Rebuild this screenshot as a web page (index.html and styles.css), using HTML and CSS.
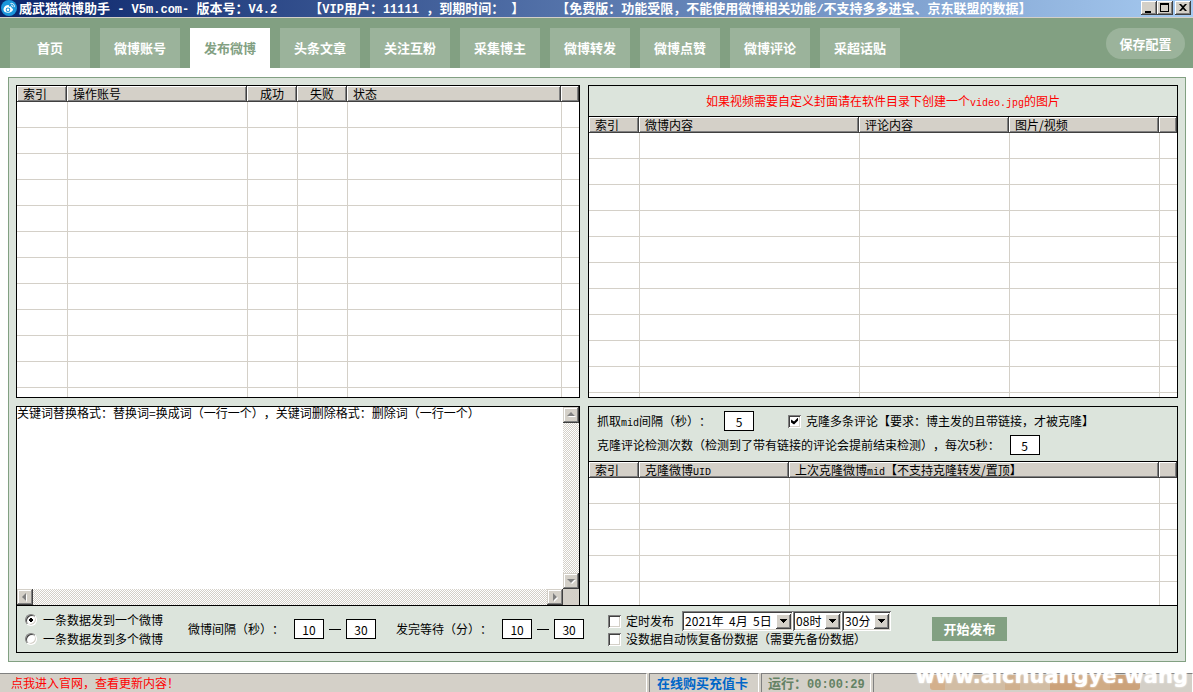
FILE: index.html
```html
<!DOCTYPE html>
<html lang="zh-CN">
<head>
<meta charset="utf-8">
<title>威武猫微博助手</title>
<link rel="stylesheet" href="styles.css">
</head>
<body>
<div class="app">
  <header class="titlebar">
    <svg class="logo" viewBox="0 0 16 16" aria-hidden="true">
      <circle cx="8" cy="8" r="8" fill="#1b96dc"/>
      <path d="M7 5C4 5 2.500 8 2.500 9.500C2.500 14 12 13.500 12 9.500C12 8.500 11 8.200 10.500 8C11 6.500 9.500 6 8 6.700C8 5.500 8 5 7 5Z" fill="#fff"/>
      <circle cx="7" cy="9.700" r="2.300" fill="#1b96dc"/>
      <circle cx="7" cy="9.700" r="1.300" fill="#fff"/>
      <path d="M9.500 3.500C12 2.800 14 5 13.200 7.200M10 5.200C11.200 5 12 6 11.600 7" fill="none" stroke="#fff"/>
    </svg>
    <h1 class="caption">
      <span>威武猫微博助手<i> - V5m.com- </i>版本号：<i>V4.2</i></span>
      <span>【<i>VIP</i>用户：<i>11111 </i>，到期时间：<i> </i>】</span>
      <span>【免费版：功能受限，不能使用微博相关功能<i>/</i>不支持多多进宝、京东联盟的数据】</span>
    </h1>
    <div class="win-buttons">
      <button class="win-btn" aria-label="最小化"><svg viewBox="0 0 16 14"><path d="M4 10h6v2H4z"/></svg></button>
      <button class="win-btn" aria-label="最大化"><svg viewBox="0 0 16 14"><path d="M3 2h9v9H3zM4 4v6h7V4z" fill-rule="evenodd"/></svg></button>
      <button class="win-btn win-close" aria-label="关闭"><svg viewBox="0 0 16 14"><path d="M4 3h2l2 2 2-2h2L9 6.500l3 3.500h-2L8 8l-2 2H4l3-3.500z"/></svg></button>
    </div>
  </header>

  <nav class="nav">
    <button class="tab">首页</button>
    <button class="tab">微博账号</button>
    <button class="tab active">发布微博</button>
    <button class="tab">头条文章</button>
    <button class="tab">关注互粉</button>
    <button class="tab">采集博主</button>
    <button class="tab">微博转发</button>
    <button class="tab">微博点赞</button>
    <button class="tab">微博评论</button>
    <button class="tab">采超话贴</button>
    <button class="save">保存配置</button>
  </nav>

  <main class="panel">
    <div class="quads">
      <section class="box">
        <div class="table-wrap">
          <table>
            <colgroup><col class="c50"><col class="c180"><col class="c50"><col class="c50"><col><col class="c18"></colgroup>
            <thead><tr><th>索引</th><th>操作账号</th><th class="mid">成功</th><th class="mid">失败</th><th>状态</th><th></th></tr></thead>
            <tbody>
              <tr><td></td><td></td><td></td><td></td><td></td><td></td></tr>
              <tr><td></td><td></td><td></td><td></td><td></td><td></td></tr>
              <tr><td></td><td></td><td></td><td></td><td></td><td></td></tr>
              <tr><td></td><td></td><td></td><td></td><td></td><td></td></tr>
              <tr><td></td><td></td><td></td><td></td><td></td><td></td></tr>
              <tr><td></td><td></td><td></td><td></td><td></td><td></td></tr>
              <tr><td></td><td></td><td></td><td></td><td></td><td></td></tr>
              <tr><td></td><td></td><td></td><td></td><td></td><td></td></tr>
              <tr><td></td><td></td><td></td><td></td><td></td><td></td></tr>
              <tr><td></td><td></td><td></td><td></td><td></td><td></td></tr>
              <tr><td></td><td></td><td></td><td></td><td></td><td></td></tr>
              <tr><td></td><td></td><td></td><td></td><td></td><td></td></tr>
            </tbody>
          </table>
        </div>
      </section>

      <section class="box">
        <p class="notice">如果视频需要自定义封面请在软件目录下创建一个<i>video.jpg</i>的图片</p>
        <div class="table-wrap">
          <table>
            <colgroup><col class="c50"><col><col class="c150"><col class="c150"><col class="c18"></colgroup>
            <thead><tr><th>索引</th><th>微博内容</th><th>评论内容</th><th>图片/视频</th><th></th></tr></thead>
            <tbody>
              <tr><td></td><td></td><td></td><td></td><td></td></tr>
              <tr><td></td><td></td><td></td><td></td><td></td></tr>
              <tr><td></td><td></td><td></td><td></td><td></td></tr>
              <tr><td></td><td></td><td></td><td></td><td></td></tr>
              <tr><td></td><td></td><td></td><td></td><td></td></tr>
              <tr><td></td><td></td><td></td><td></td><td></td></tr>
              <tr><td></td><td></td><td></td><td></td><td></td></tr>
              <tr><td></td><td></td><td></td><td></td><td></td></tr>
              <tr><td></td><td></td><td></td><td></td><td></td></tr>
              <tr><td></td><td></td><td></td><td></td><td></td></tr>
              <tr><td></td><td></td><td></td><td></td><td></td></tr>
            </tbody>
          </table>
        </div>
      </section>

      <section class="box open editor">
        <textarea aria-label="关键词替换" spellcheck="false">关键词替换格式：替换词=换成词（一行一个），关键词删除格式：删除词（一行一个）</textarea>
        <div class="bar vertical">
          <button class="arrow" aria-label="向上"><svg viewBox="0 0 16 16"><path d="M5 10h8L9 6z" fill="#fff"/><path d="M4 9h8L8 5z" fill="#808080"/></svg></button>
          <button class="arrow" aria-label="向下"><svg viewBox="0 0 16 16"><path d="M5 7h8L9 11z" fill="#fff"/><path d="M4 6h8L8 10z" fill="#808080"/></svg></button>
        </div>
        <div class="bar horizontal">
          <button class="arrow" aria-label="向左"><svg viewBox="0 0 16 16"><path d="M10 5v8L6 9z" fill="#fff"/><path d="M9 4v8L5 8z" fill="#808080"/></svg></button>
          <button class="arrow" aria-label="向右"><svg viewBox="0 0 16 16"><path d="M7 5v8l4-4z" fill="#fff"/><path d="M6 4v8l4-4z" fill="#808080"/></svg></button>
        </div>
        <div class="corner"></div>
      </section>

      <section class="box open">
        <div class="form">
          <div class="line">
            <label for="mid">抓取<i>mid</i>间隔（秒）：</label><input class="num" id="mid" value="5">
            <label class="check clone"><input type="checkbox" checked>克隆多条评论【要求：博主发的且带链接，才被克隆】</label>
          </div>
          <div class="line second">
            <label for="times">克隆评论检测次数（检测到了带有链接的评论会提前结束检测），每次5秒：</label><input class="num" id="times" value="5">
          </div>
        </div>
        <div class="table-wrap">
          <table>
            <colgroup><col class="c50"><col class="c150"><col><col class="c18"></colgroup>
            <thead><tr><th>索引</th><th>克隆微博<i>UID</i></th><th>上次克隆微博<i>mid</i>【不支持克隆转发/置顶】</th><th></th></tr></thead>
            <tbody>
              <tr><td></td><td></td><td></td><td></td></tr>
              <tr><td></td><td></td><td></td><td></td></tr>
              <tr><td></td><td></td><td></td><td></td></tr>
              <tr><td></td><td></td><td></td><td></td></tr>
              <tr><td></td><td></td><td></td><td></td></tr>
            </tbody>
          </table>
        </div>
      </section>
    </div>

    <section class="controls">
      <div class="stack modes">
        <label class="check"><input type="radio" name="mode" checked>一条数据发到一个微博</label>
        <label class="check"><input type="radio" name="mode">一条数据发到多个微博</label>
      </div>
      <div class="range">
        <label for="gap1">微博间隔（秒）：</label>
        <input class="num" id="gap1" value="10"><span class="dash"></span><input class="num" aria-label="微博间隔上限" value="30">
      </div>
      <div class="range">
        <label for="wait1">发完等待（分）：</label>
        <input class="num" id="wait1" value="10"><span class="dash"></span><input class="num" aria-label="发完等待上限" value="30">
      </div>
      <div class="stack options">
        <div class="timer">
          <label class="check"><input type="checkbox">定时发布</label>
          <div class="selects">
            <select class="date" aria-label="日期"><option>2021年&nbsp; 4月&nbsp; 5日</option></select>
            <select aria-label="小时"><option>08时</option></select>
            <select aria-label="分钟"><option>30分</option></select>
          </div>
        </div>
        <label class="check"><input type="checkbox">没数据自动恢复备份数据（需要先备份数据）</label>
      </div>
      <button class="start">开始发布</button>
    </section>
  </main>

  <footer class="status">
    <a class="cell news" href="#">点我进入官网，查看更新内容！</a>
    <a class="cell buy" href="#">在线购买充值卡</a>
    <span class="cell run">运行：<i>00:00:29</i></span>
    <span class="cell rest"></span>
    <span class="smudge"></span>
    <span class="mark">www.aichuangye.wang</span>
  </footer>
</div>
</body>
</html>
```
FILE: styles.css
```css
* { box-sizing: border-box; }

body {
  margin: 0;
  background: #fff;
  color: #000;
  font: 12px/16px "Noto Sans CJK SC", sans-serif;
  text-spacing-trim: space-all;
}

button, input, select, textarea { font: inherit; color: inherit; margin: 0; border-radius: 0; text-spacing-trim: inherit; }
button { border: 0; padding: 0; white-space: nowrap; }
a { text-decoration: none; }
label { white-space: nowrap; }
i { font-family: "Liberation Mono", monospace; font-size: 10px; font-style: normal; line-height: 1px; white-space: pre; }

.app { display: flex; flex-direction: column; height: 100vh; min-height: 600px; overflow: hidden; }

/* title bar */
.titlebar {
  display: flex;
  align-items: center;
  gap: 2px;
  height: 18px;
  padding: 0 2px 1px 1px;
  border-bottom: 1px solid #d4d0c8;
  background: linear-gradient(90deg, #0a246a, #a6caf0);
}
.logo { width: 16px; height: 16px; flex: none; }
.caption {
  display: flex;
  flex: 1;
  gap: 32px;
  margin: 0;
  color: #fff;
  font-size: 13px;
  font-weight: bold;
  line-height: 16px;
  white-space: nowrap;
}
.caption i { font-size: 12px; }
.win-buttons { display: flex; }
.win-btn {
  width: 16px;
  height: 14px;
  background: #d4d0c8;
  box-shadow: inset -1px -1px #404040, inset 1px 1px #fff, inset -2px -2px #808080;
}
.win-btn svg { display: block; width: 16px; height: 14px; }
.win-close { margin-left: 2px; }

/* tabs */
.nav { display: flex; gap: 10px; height: 50px; padding: 10px 8px 0 10px; background: #82a082; }
.tab, .save { background: #9bb39b; color: #fff; font-size: 13px; font-weight: bold; }
.tab { width: 80px; height: 40px; }
.tab.active { background: #fff; color: #82a082; }
.save { width: 79px; height: 31px; margin-left: auto; border-radius: 16px; }

/* main panel */
.panel {
  display: flex;
  flex: 1;
  flex-direction: column;
  min-height: 0;
  margin: 9px 7px 11px 8px;
  padding: 7px 7px 8px;
  border: 1px solid #82a082;
  background: #dce4dc;
}
.quads {
  display: grid;
  flex: 1;
  grid-template-columns: minmax(0, 564fr) minmax(0, 590fr);
  grid-template-rows: minmax(0, 313fr) minmax(0, 199fr);
  gap: 8px;
  min-height: 0;
}
.box { display: flex; flex-direction: column; min-height: 0; border: 1px solid #000; }
.open { border-bottom: 0; }
.notice { margin: 0; padding: 7px 0; border-bottom: 1px solid #000; color: #f00; text-align: center; }

/* grids */
.table-wrap { flex: 1; min-height: 0; overflow: hidden; background: #fff; }
table { width: 100%; border-spacing: 0; table-layout: fixed; }
th {
  height: 16px;
  padding: 0 6px;
  background: #d4d0c8;
  box-shadow: inset -1px -1px #404040, inset 1px 1px #fff, inset -2px -2px #808080;
  font-weight: normal;
  line-height: 16px;
  text-align: left;
  white-space: nowrap;
}
.mid { text-align: center; }
td { height: 26px; padding: 0; border-bottom: 1px solid #d4d0c8; }
td + td { border-left: 1px solid #d4d0c8; }
.c18 { width: 18px; }
.c50 { width: 50px; }
.c150 { width: 150px; }
.c180 { width: 180px; }

/* keyword editor */
.editor { display: grid; grid-template: minmax(0, 1fr) 16px / minmax(0, 1fr) 16px; }
textarea { border: 0; padding: 0; outline: 0; resize: none; overflow: hidden; line-height: 12px; background: #fff; white-space: pre; }
.bar { display: flex; justify-content: space-between; background: repeating-conic-gradient(#d4d0c8 0 25%, #fff 0 50%) 0 0 / 2px 2px; }
.vertical { flex-direction: column; }
.arrow {
  width: 16px;
  height: 16px;
  background: #d4d0c8;
  box-shadow: inset -1px -1px #404040, inset 1px 1px #d4d0c8, inset -2px -2px #808080, inset 2px 2px #fff;
}
.arrow svg { display: block; width: 16px; height: 16px; }
.corner { background: #d4d0c8; }

/* form parts */
.form { padding: 4px 8px 6px; border-bottom: 1px solid #000; }
.line { display: flex; align-items: center; gap: 13px; height: 20px; }
.second { gap: 10px; margin-top: 4px; }
.clone { margin-left: 21px; }
.num { width: 30px; height: 20px; border: 1px solid #000; padding: 0; background: #fff; line-height: 18px; text-align: center; }
.check { display: flex; align-items: center; gap: 5px; }
.check input { appearance: none; flex: none; width: 13px; height: 13px; background: #fff; }
.check input[type="checkbox"] { box-shadow: inset 1px 1px #808080, inset -1px -1px #fff, inset 2px 2px #404040, inset -2px -2px #d4d0c8; }
.check input[type="checkbox"]:checked::before {
  content: "";
  display: block;
  width: 7px;
  height: 7px;
  margin: 3px;
  background: #000;
  clip-path: polygon(0 2px, 3px 4px, 7px 0, 7px 3px, 3px 7px, 0 5px);
}
.check input[type="radio"] {
  width: 12px;
  height: 12px;
  margin-right: 1px;
  border: 1px solid;
  border-color: #808080 #fff #fff #808080;
  border-radius: 50%;
  box-shadow: inset 1px 1px #404040, inset -1px -1px #d4d0c8;
}
.check input[type="radio"]:checked { background: radial-gradient(circle, #000 0 2px, #fff 2px); }

/* bottom controls */
.controls { display: flex; align-items: center; height: 48px; padding: 0 8px; border: 1px solid #000; }
.stack { display: flex; flex-direction: column; }
.modes { gap: 3px; margin-right: 25px; }
.range { display: flex; align-items: center; margin-right: 20px; }
.range label { margin-right: 10px; }
.dash { width: 12px; height: 1px; margin: 0 5px; background: #000; }
.options { margin: 0 0 0 4px; }
.timer { display: flex; align-items: center; gap: 8px; height: 20px; }
.selects { display: flex; }
select {
  appearance: none;
  width: 49px;
  height: 20px;
  border: 0;
  padding: 0 0 0 3px;
  line-height: 18px;
  background:
    linear-gradient(#000, #000) right 9px top 11px / 1px 1px no-repeat,
    linear-gradient(#000, #000) right 8px top 10px / 3px 1px no-repeat,
    linear-gradient(#000, #000) right 7px top 9px / 5px 1px no-repeat,
    linear-gradient(#000, #000) right 6px top 8px / 7px 1px no-repeat,
    linear-gradient(#d4d0c8, #d4d0c8) right 4px top 4px / 12px 12px no-repeat,
    linear-gradient(#808080, #808080) right 3px top 4px / 13px 13px no-repeat,
    linear-gradient(#fff, #fff) right 3px top 3px / 14px 14px no-repeat,
    linear-gradient(#404040, #404040) right 2px top 3px / 15px 15px no-repeat,
    #fff;
  box-shadow: inset 1px 1px #808080, inset -1px -1px #fff, inset 2px 2px #404040, inset -2px -2px #d4d0c8;
}
.date { width: 111px; }
.start { width: 75px; height: 24px; margin: 0 0 0 41px; background: #82a082; color: #fff; font-size: 13px; font-weight: bold; }

/* status bar */
.status { position: relative; display: flex; gap: 2px; height: 19px; background: #d4d0c8; }
.cell { border-top: 1px solid #808080; border-left: 1px solid #808080; border-right: 1px solid #fff; padding-left: 7px; line-height: 18px; white-space: nowrap; }
.news { flex: 1; padding-left: 11px; border-left: 0; color: #f00; }
.buy { width: 110px; color: #0066c8; font-size: 13px; font-weight: bold; }
.run { width: 110px; padding-left: 6px; color: #648264; font-size: 13px; font-weight: bold; }
.run i { font-size: 12px; }
.rest { width: 320px; }
.smudge {
  position: absolute;
  right: 53px;
  bottom: 2px;
  width: 210px;
  height: 15px;
  border-radius: 3px;
  background: linear-gradient(90deg, #d4b08c 0 15px, #d2bda4 15px 75px, #d0b08e 75px 90px, #d2bda4 90px 120px, #cca27a 120px 150px, #d0ac86 150px 180px, #cca27a 180px);
}
.mark {
  position: absolute;
  right: 5px;
  bottom: 4px;
  color: #fff;
  font: bold 21px/24px "DejaVu Sans", sans-serif;
  text-shadow: 0 0 2px #fff;
}
```
